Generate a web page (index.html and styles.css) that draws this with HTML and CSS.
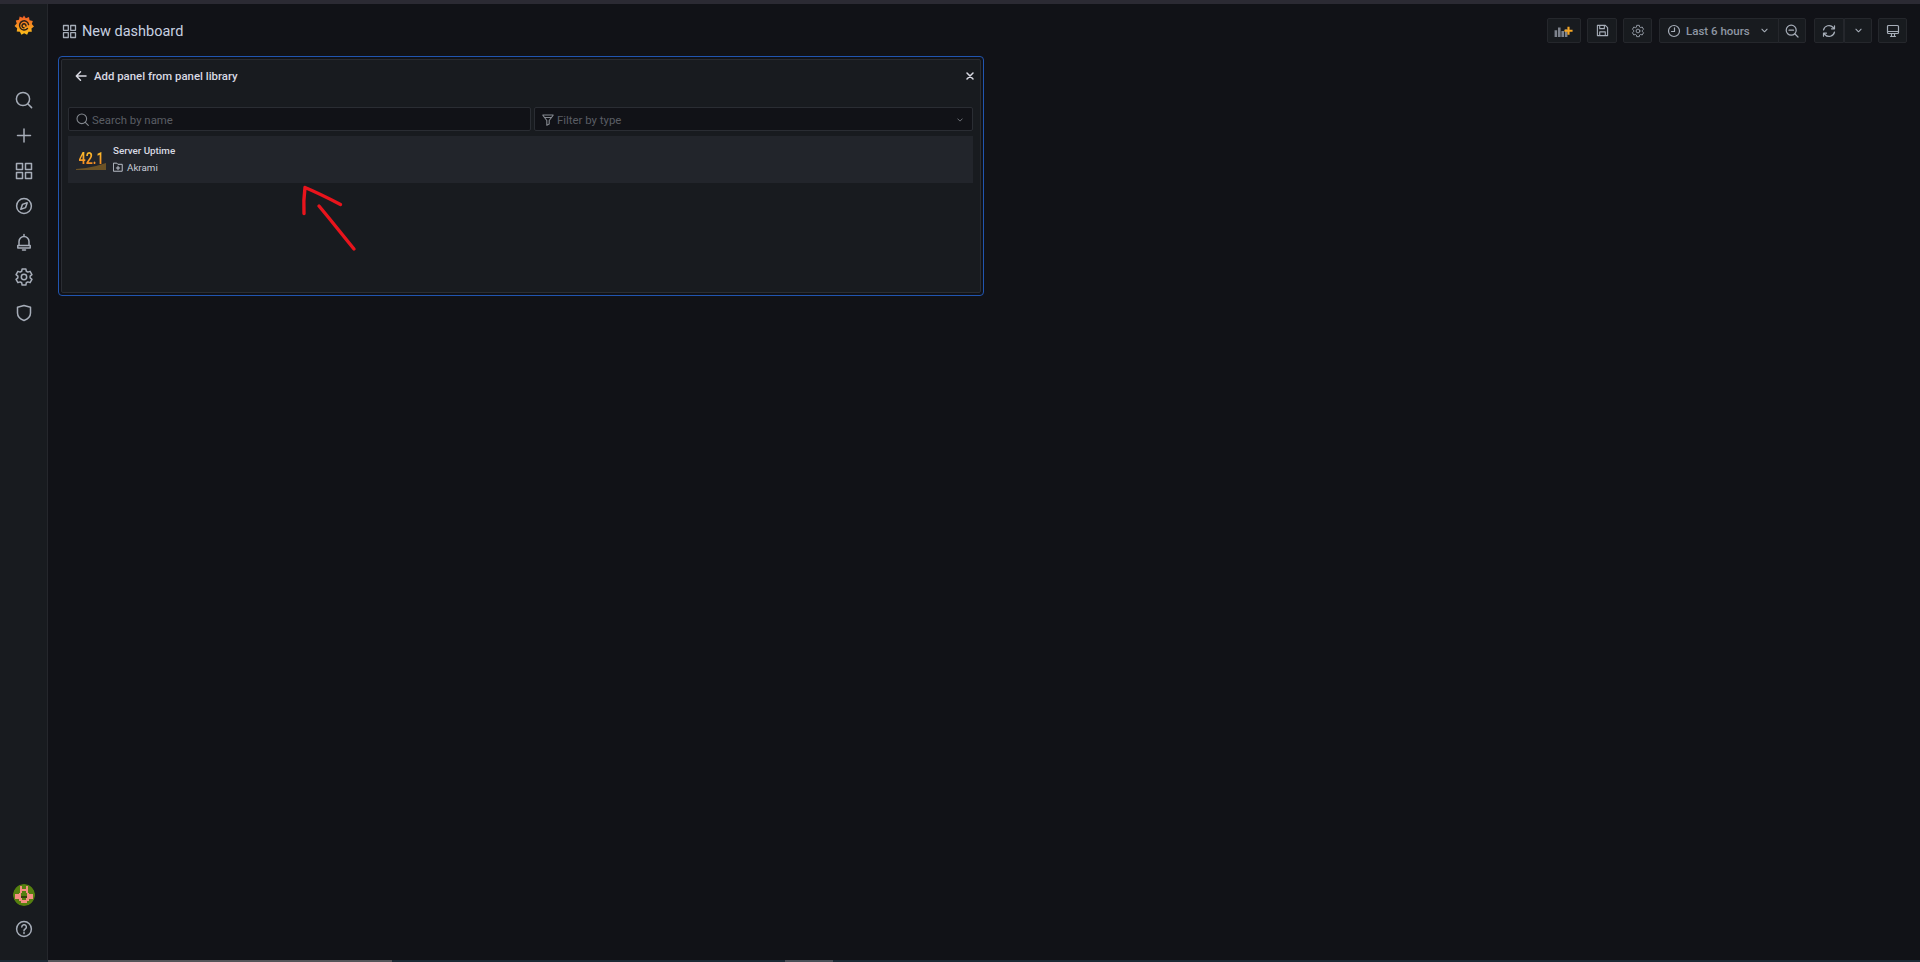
FILE: index.html
```html
<!DOCTYPE html>
<html lang="en">
<head>
<meta charset="utf-8">
<title>New dashboard</title>
<link rel="stylesheet" href="styles.css">
</head>
<body>
<div class="top-strip"></div>
<div class="app">
  <nav class="sidebar">
    <div class="logo">
      <svg width="20" height="22" viewBox="0 0 22 24">
        <defs><linearGradient id="lg" x1="0" y1="1" x2="0" y2="0"><stop offset="0" stop-color="#fcc21a"/><stop offset="1" stop-color="#f05a28"/></linearGradient></defs>
        <path fill="url(#lg)" d="M11 1.500l2 3 3.500-1.200.6 3.500 3.600.8-1.100 3.400 2.400 2.600-2.800 2.200.4 3.600-3.600.1-1.600 3.200-3.200-1.600-3.100 1.600-1.600-3.200-3.500-.4.5-3.500L.6 13l2.400-2.700L2 7l3.500-.8.7-3.500 3.300 1.300z"/>
        <path fill="none" stroke="#2a2018" stroke-width="1.600" stroke-linecap="round" d="M16 11.500a5 5 0 1 0-1.200 4.300M13.200 13a2.200 2.200 0 1 0-2.200 2.100"/>
      </svg>
    </div>
    <div class="nav-main">
      <a class="nav-item"><svg class="ic" width="20" height="20" viewBox="0 0 20 20"><circle cx="9" cy="9" r="6.600"/><path d="M14 14l3.600 3.600"/></svg></a>
      <a class="nav-item"><svg class="ic" width="20" height="20" viewBox="0 0 20 20"><path d="M10 3v13M3.500 9.500h13"/></svg></a>
      <a class="nav-item"><svg class="ic" width="20" height="20" viewBox="0 0 20 20"><rect x="2.500" y="2.500" width="6" height="6"/><rect x="11.500" y="2.500" width="6" height="6"/><rect x="2.500" y="11.500" width="6" height="6"/><rect x="11.500" y="11.500" width="6" height="6"/></svg></a>
      <a class="nav-item"><svg class="ic" width="20" height="20" viewBox="0 0 20 20"><circle cx="10" cy="10" r="7.400"/><path d="M13.200 6.800l-1.600 4.800-4.800 1.600 1.600-4.800z"/></svg></a>
      <a class="nav-item"><svg class="ic" width="20" height="20" viewBox="0 0 20 20"><path d="M5 13.500V9.500a5 5 0 0 1 10 0v4M3.800 13.500h12.400v2.500H3.800zM10 2.500v2M8.500 18h3"/></svg></a>
      <a class="nav-item"><svg class="ic" width="20" height="20" viewBox="0 0 20 20"><circle cx="10" cy="10" r="2.700"/><path d="M7.680 4.250L8.130 1.910H11.870L12.320 4.250L13.820 5.110L16.070 4.340L17.940 7.570L16.140 9.140V10.860L17.940 12.430L16.070 15.660L13.820 14.890L12.320 15.750L11.870 18.090H8.130L7.680 15.750L6.180 14.890L3.930 15.660L2.060 12.430L3.860 10.860V9.140L2.060 7.570L3.930 4.340L6.180 5.110z"/></svg></a>
      <a class="nav-item"><svg class="ic" width="20" height="20" viewBox="0 0 20 20"><path d="M10 2.500l6.500 1.800v5.700c0 3.700-2.600 6-6.500 7.500-3.900-1.500-6.500-3.800-6.500-7.500V4.300z"/></svg></a>
    </div>
    <div class="nav-bottom">
      <svg class="avatar" width="22" height="22" viewBox="0 0 22 22" shape-rendering="crispEdges">
        <defs><clipPath id="av"><circle cx="11" cy="11" r="11"/></clipPath></defs>
        <g clip-path="url(#av)">
          <rect width="22" height="22" fill="#55800f"/>
          <path fill="#f48f82" d="M7 2h2v3h4V2h2v7h-2V7H9v2H7zM2 10h4v-1h2v3h6V9h2v1h4v5h-4v2h-2v2H8v-2H6v-2H2z"/>
          <path fill="#55800f" d="M9 14h4v2H9zM2 9h3v1H2z"/>
          <path fill="#33410c" d="M8 12h6v2H8z"/>
        </g>
      </svg>
      <a class="nav-item"><svg class="ic" width="20" height="20" viewBox="0 0 20 20"><circle cx="10" cy="10" r="7.400"/><path d="M7.800 8a2.300 2.300 0 1 1 3.400 2c-.8.400-1.200.9-1.200 1.700M10 13.400v1"/></svg></a>
    </div>
  </nav>
  <main class="main">
    <header class="header">
      <div class="title">
        <svg class="ic ic-title" width="15" height="15" viewBox="0 0 15 15"><rect x="1.500" y="1.500" width="4.800" height="4.800"/><rect x="8.700" y="1.500" width="4.800" height="4.800"/><rect x="1.500" y="8.700" width="4.800" height="4.800"/><rect x="8.700" y="8.700" width="4.800" height="4.800"/></svg>
        <span>New dashboard</span>
      </div>
      <div class="toolbar">
        <button class="btn btn-add">
          <svg width="20" height="12" viewBox="0 0 22 14"><path fill="#7d828c" d="M0 6h3v8H0zM4 3h3v11H4zM8 7h3v7H8zM12 5h3v9h-3z"/><path fill="#f5a623" d="M15 2h2.500V5.500H21V8h-3.500v3.500H15V8h-3.500V5.500H15z"/></svg>
        </button>
        <button class="btn btn-save">
          <svg class="ic ic-sm" width="13" height="13" viewBox="0 0 14 14"><path d="M2 1.500h8l2.500 2.500v8.500H1.500v-11zM4 1.500v3.500h5V1.500M4 12.500V8.500h6v4"/></svg>
        </button>
        <button class="btn btn-gear">
          <svg class="ic ic-sm" width="14" height="14" viewBox="0 0 20 20"><circle cx="10" cy="10" r="2.700"/><path d="M7.680 4.250L8.130 1.910H11.870L12.320 4.250L13.820 5.110L16.070 4.340L17.940 7.570L16.140 9.140V10.860L17.940 12.430L16.070 15.660L13.820 14.890L12.320 15.750L11.870 18.090H8.130L7.680 15.750L6.180 14.890L3.930 15.660L2.060 12.430L3.860 10.860V9.140L2.060 7.570L3.930 4.340L6.180 5.110z"/></svg>
        </button>
        <div class="group group-time">
          <button class="btn btn-time">
            <svg class="ic ic-sm" width="14" height="14" viewBox="0 0 14 14"><circle cx="7" cy="7" r="5.500"/><path d="M7.500 3.800V7.500H4.500"/></svg>
            <span>Last 6 hours</span>
            <svg class="ic ic-chev" width="7" height="5" viewBox="0 0 8 5"><path d="M1 1l3 3 3-3"/></svg>
          </button>
          <button class="btn btn-zoom">
            <svg class="ic ic-sm" width="14" height="14" viewBox="0 0 14 14"><circle cx="6.200" cy="6.200" r="5"/><path d="M10 10l3 3M4 6.200h4.500"/></svg>
          </button>
        </div>
        <div class="group group-refresh">
          <button class="btn btn-refresh">
            <svg class="ic ic-sm" width="14" height="14" viewBox="0 0 14 14"><path d="M1.500 6a5.600 5.600 0 0 1 9.700-2.500l1.300 1.300M12.500 1.800v3h-3M12.500 8a5.600 5.600 0 0 1-9.700 2.500L1.500 9.200M1.500 12.200v-3h3"/></svg>
          </button>
          <button class="btn btn-caret">
            <svg class="ic ic-chev" width="7" height="5" viewBox="0 0 8 5"><path d="M1 1l3 3 3-3"/></svg>
          </button>
        </div>
        <button class="btn btn-tv">
          <svg class="ic ic-sm" width="14" height="14" viewBox="0 0 14 14"><rect x="1.500" y="1.500" width="11" height="8" rx="1"/><path d="M1.500 7.500h11M4.500 12.500h5M5.500 9.500v3M8.500 9.500v3"/></svg>
        </button>
      </div>
    </header>
    <section class="panel">
      <div class="panel-inner">
        <div class="panel-head">
          <div class="panel-title">
            <svg class="ic ic-light" width="12" height="12" viewBox="0 0 12 12"><path d="M11 6H1.500M5.500 1.800L1.300 6l4.200 4.200"/></svg>
            <span>Add panel from panel library</span>
          </div>
          <svg class="ic ic-light" width="8" height="8" viewBox="0 0 8 8"><path d="M1 1l6 6M7 1L1 7"/></svg>
        </div>
        <div class="filters">
          <div class="field field-search">
            <svg class="ic ic-field" width="13" height="13" viewBox="0 0 13 13"><circle cx="5.800" cy="5.800" r="4.800"/><path d="M9.300 9.300l3 3"/></svg>
            <span>Search by name</span>
          </div>
          <div class="field field-filter">
            <svg class="ic ic-field" width="12" height="12" viewBox="0 0 12 12"><path d="M.8 1h10.400M1 1.500l3.800 5v4.700l2.400-1.200V6.500l3.800-5M2.800 3.500h6.400"/></svg>
            <span class="field-text">Filter by type</span>
            <svg class="ic ic-chev ic-chev-dim" width="6" height="4" viewBox="0 0 8 5"><path d="M1 1l3 3 3-3"/></svg>
          </div>
        </div>
        <div class="lib-row">
          <div class="thumb">
            <span class="thumb-value">42.1</span>
            <svg class="thumb-spark" width="30" height="7" viewBox="0 0 30 7"><path fill="#6b5226" d="M0 6l10-1 10-2 10-3v7H0z"/></svg>
          </div>
          <div class="lib-info">
            <div class="lib-name">Server Uptime</div>
            <div class="lib-folder">
              <svg class="ic ic-folder" width="10" height="10" viewBox="0 0 13 13"><path d="M1 1.500h4l1.300 1.500h5.700v9H1zM6.500 5.500v4.500M4.300 7.800h4.400"/></svg>
              <span>Akrami</span>
            </div>
          </div>
        </div>
      </div>
    </section>
  </main>
</div>
<div class="bottom-strip">
  <div class="strip-seg seg-a"></div>
  <div class="strip-seg seg-b"></div>
</div>
<svg class="annotation" width="70" height="75" viewBox="0 0 70 75">
  <path d="M4 34.500C3.500 26 4 16 5 8.500c12 5 24 11 35.500 17"/>
  <path d="M19 27c11 13 21 26 35 43"/>
</svg>
</body>
</html>
```
FILE: styles.css
```css
* { box-sizing: border-box; }
html, body { height: 100%; }
body {
  margin: 0;
  height: 962px;
  overflow: hidden;
  display: flex;
  flex-direction: column;
  position: relative;
  background: #111217;
  color: #ccccdc;
  font-family: Roboto, "Liberation Sans", sans-serif;
}
.top-strip { height: 4px; background: #2b2a33; flex: none; }
.app { flex: 1; display: flex; min-height: 0; }
.bottom-strip { height: 2px; flex: none; background: #1b2a35; position: relative; }
.strip-seg { position: absolute; top: 0; bottom: 0; }
.seg-a { left: 48px; width: 344px; background: #55555a; }
.seg-b { left: 785px; width: 48px; background: #4a5058; }

.ic { fill: none; stroke: #a6adb8; stroke-width: 1.5; stroke-linecap: round; stroke-linejoin: round; flex: none; display: block; }

/* sidebar */
.sidebar {
  width: 48px;
  flex: none;
  background: #181b1f;
  border-right: 1px solid #25272c;
  display: flex;
  flex-direction: column;
  align-items: center;
}
.logo { height: 42px; padding-top: 10px; display: flex; justify-content: center; }
.nav-main { margin-top: 36.5px; display: flex; flex-direction: column; }
.nav-item { width: 47px; height: 35.4px; display: flex; align-items: center; justify-content: center; }
.nav-bottom { margin-top: auto; display: flex; flex-direction: column; align-items: center; padding-bottom: 13px; gap: 6px; }
.avatar { display: block; border-radius: 50%; }

/* header */
.main { flex: 1; min-width: 0; }
.header { height: 52px; padding: 14px 13px 13px 14px; display: flex; align-items: center; justify-content: space-between; }
.title { display: flex; align-items: center; gap: 5px; font-size: 14.5px; color: #c7d0e0; padding-top: 1px; }
.ic-title { stroke-width: 1.3; }
.toolbar { display: flex; align-items: stretch; height: 25px; gap: 6px; }
.btn {
  height: 25px;
  padding: 0;
  background: #181b1f;
  border: 1px solid #25272c;
  border-radius: 2px;
  display: flex;
  align-items: center;
  justify-content: center;
  color: #8e96a3;
  font-family: inherit;
}
.ic-sm { stroke-width: 1.2; }
.ic-chev { stroke-width: 1.2; }
.ic-chev-dim { stroke: #777b82; }
.btn-add { width: 34px; }
.btn-save { width: 30px; }
.btn-gear { width: 29px; }
.group { display: flex; }
.group-time { margin-left: 1px; }
.group-refresh { margin-left: 2px; }
.btn-time { width: 120px; gap: 5px; font-size: 11.5px; font-weight: 500; border-radius: 2px 0 0 2px; padding: 0 10px 0 7px; justify-content: space-between; }
.btn-time span { flex: 1; text-align: left; }
.btn-zoom { width: 28px; margin-left: -1px; border-radius: 0 2px 2px 0; }
.btn-refresh { width: 30px; border-radius: 2px 0 0 2px; }
.btn-caret { width: 28px; border-radius: 0 2px 2px 0; }
.btn-tv { width: 29px; }

/* library panel */
.panel {
  margin-left: 10px;
  width: 926px;
  height: 240px;
  border: 1px solid #2155b0;
  border-radius: 4px;
  padding: 2px;
}
.panel-inner {
  height: 100%;
  background: #181b1f;
  border: 1px solid #2a2d33;
  border-radius: 2px;
  padding: 0 7px 0 6px;
}
.panel-head { height: 47px; padding: 0 0 16px 7px; margin-right: -1px; display: flex; align-items: center; justify-content: space-between; }
.panel-title { display: flex; align-items: center; gap: 7px; font-size: 11.4px; font-weight: 500; color: #d8d9e2; }
.ic-light { stroke: #d8d9e2; }
.filters { display: flex; gap: 3px; height: 24px; }
.field {
  height: 24px;
  background: #111217;
  border: 1px solid #2a2d33;
  border-radius: 2px;
  display: flex;
  align-items: center;
  gap: 3px;
  padding: 1px 7px 0;
  font-size: 11.4px;
  color: #5a5d64;
}
.field-search { width: 463px; }
.field-filter { flex: 1; padding-right: 9px; }
.field-text { flex: 1; }
.ic-field { stroke: #84888f; stroke-width: 1.1; }
.lib-row {
  margin-top: 5px;
  height: 47px;
  background: #22252b;
  display: flex;
  align-items: center;
  padding: 0 8px;
  gap: 7px;
}
.thumb { position: relative; width: 30px; height: 20px; display: flex; justify-content: center; }
.thumb-value {
  font-size: 16px;
  font-weight: 700;
  line-height: 18px;
  transform: scaleX(.78);
  background: linear-gradient(#fcc52e, #f2741f);
  -webkit-background-clip: text;
  background-clip: text;
  color: transparent;
  position: relative;
  z-index: 1;
}
.thumb-spark { position: absolute; left: 0; bottom: 0; display: block; }
.lib-info { display: flex; flex-direction: column; gap: 4px; padding-bottom: 1px; }
.lib-name { font-size: 9.8px; font-weight: 500; line-height: 12px; color: #d8d9e2; }
.lib-folder { display: flex; align-items: center; gap: 4px; font-size: 9.8px; line-height: 13px; color: #c7ccd6; }
.ic-folder { stroke-width: 1.2; stroke: #c7ccd6; }

/* hand-drawn annotation over the page */
.annotation { position: absolute; left: 300px; top: 179px; fill: none; stroke: #e8141c; stroke-width: 3.4; stroke-linecap: round; stroke-linejoin: round; }
```
